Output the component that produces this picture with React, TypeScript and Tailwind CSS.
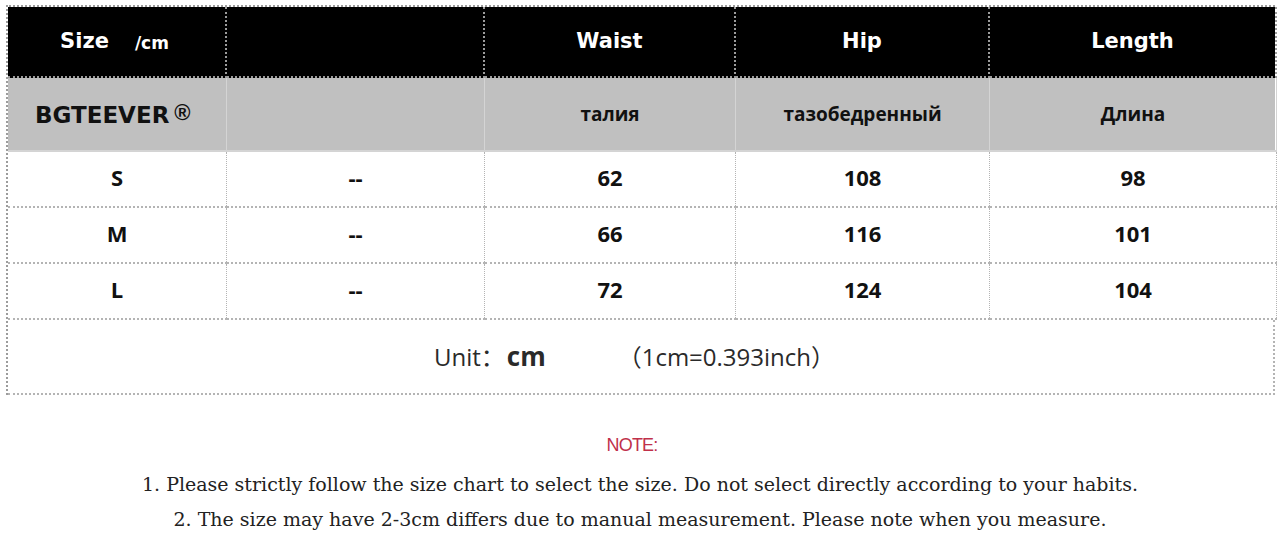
import React from 'react';

const cols = 'grid grid-cols-[219px_258px_251px_254px_287px]';

const rows = [
  { size: 'S', waist: '62', hip: '108', length: '98' },
  { size: 'M', waist: '66', hip: '116', length: '101' },
  { size: 'L', waist: '72', hip: '124', length: '104' },
];

const headCell = 'flex items-center justify-center border-r-2 border-b-2 border-dotted border-[#9c9c9c] text-white';
const grayCell = 'flex items-center justify-center border-r border-b-2 border-[#d4d4d4] text-[#111]';
const dataCell = 'flex items-center justify-center border-r border-b-2 border-dotted border-[#b4b4b4] pb-[3px] text-[#111]';

const App: React.FC = () => {
  return (
    <div className="w-[1280px] h-[534px] bg-white pt-[5px] pl-[6px]">
      {/* Size chart */}
      <div className="w-[1269px] border-l-2 border-t-2 border-dotted border-[#9c9c9c]">
        <div
          className={`${cols} h-[71px] bg-black`}
          style={{ fontFamily: '"DejaVu Sans", sans-serif' }}
        >
          <div className={`${headCell} gap-[26px] pr-[4px] font-bold`}>
            <span className="text-[21px]">Size</span>
            <span className="text-[17px] pt-[4px]">/cm</span>
          </div>
          <div className={headCell} />
          <div className={`${headCell} text-[21px] font-bold`}>Waist</div>
          <div className={`${headCell} text-[21px] font-bold`}>Hip</div>
          <div className={`${headCell} text-[21px] font-bold`}>Length</div>
        </div>

        <div className={`${cols} h-[74px] bg-[#c0c0c0]`} style={{ fontFamily: '"Open Sans", sans-serif' }}>
          <div
            className={`${grayCell} !justify-start pl-[27px] pt-[3px] text-[23px] font-bold`}
            style={{ fontFamily: '"DejaVu Sans", sans-serif' }}
          >
            BGTEEVER
            <span
              className="ml-[5px] text-[22px] -translate-y-[3px]"
              style={{ fontFamily: '"Liberation Sans", sans-serif' }}
            >
              ®
            </span>
          </div>
          <div className={grayCell} />
          <div className={`${grayCell} text-[19px] font-bold`}>талия</div>
          <div className={`${grayCell} text-[19px] font-bold`}>тазобедренный</div>
          <div className={`${grayCell} text-[19px] font-bold`}>Длина</div>
        </div>

        {rows.map(r => (
          <div
            key={r.size}
            className={`${cols} h-[56px]`}
            style={{ fontFamily: '"Open Sans", sans-serif' }}
          >
            <div className={`${dataCell} text-[22px] font-bold`}>{r.size}</div>
            <div className={`${dataCell} text-[22px] font-bold`}>--</div>
            <div className={`${dataCell} text-[22px] font-bold`}>{r.waist}</div>
            <div className={`${dataCell} text-[22px] font-bold`}>{r.hip}</div>
            <div className={`${dataCell} text-[22px] font-bold`}>{r.length}</div>
          </div>
        ))}

        <div
          className="flex h-[75px] items-center justify-center border-r-2 border-b-2 border-dotted border-[#b4b4b4] pr-[12px] text-[#2a2a2a]"
          style={{ fontFamily: '"Open Sans", "Noto Sans CJK SC", sans-serif' }}
        >
          <span className="text-[24px]">Unit：</span>
          <span className="ml-[2px] text-[26px] font-bold">cm</span>
          <span className="ml-[72px] text-[24px]">（1cm=0.393inch）</span>
        </div>
      </div>

      {/* Notes */}
      <div className="flex flex-col items-center pr-[6px] pt-[40px]">
        <p
          className="mr-[16px] text-[18px] leading-[20px] tracking-[-0.8px] text-[#c0304a]"
          style={{ fontFamily: '"Liberation Sans", sans-serif' }}
        >
          NOTE:
        </p>
        <div className="flex flex-col items-center gap-[13px] pt-[18px] text-[#222]" style={{ fontFamily: '"DejaVu Serif", serif' }}>
          <p className="text-[19px] leading-[22px]">
            1. Please strictly follow the size chart to select the size. Do not select directly according to your habits.
          </p>
          <p className="text-[19px] leading-[22px]">
            2. The size may have 2-3cm differs due to manual measurement. Please note when you measure.
          </p>
        </div>
      </div>
    </div>
  );
};

export default App;
